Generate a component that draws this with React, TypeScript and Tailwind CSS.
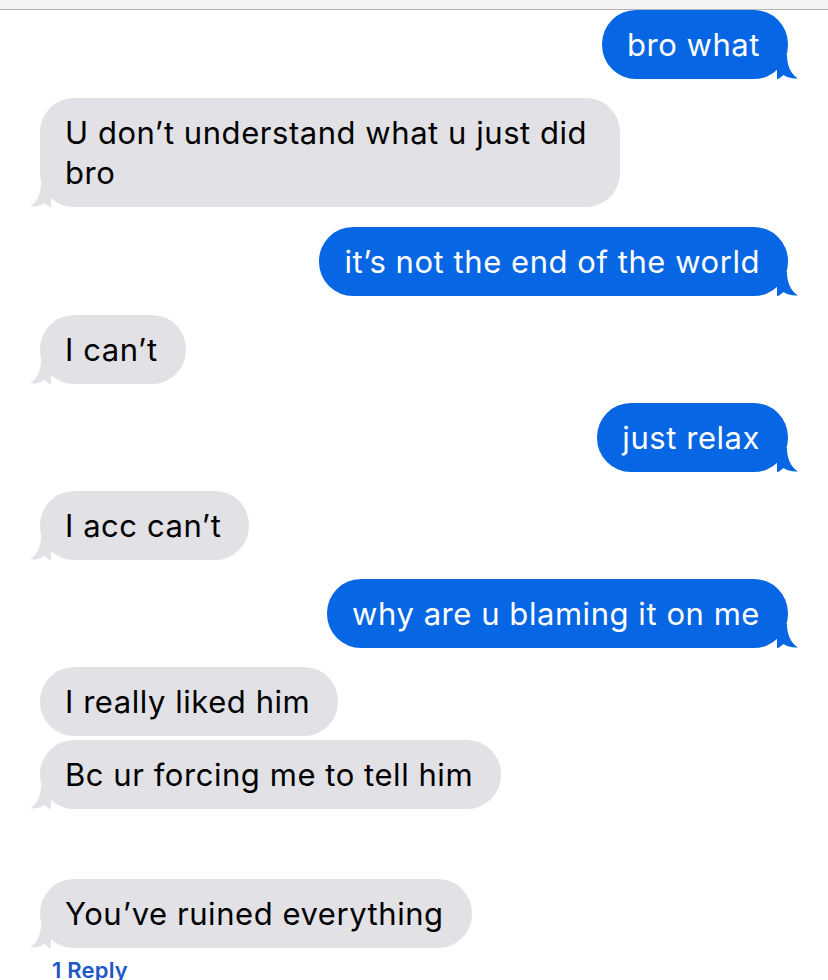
import React from 'react';

type Msg = { text: string; me?: boolean; tail?: boolean; gap?: string };

const MESSAGES: Msg[] = [
  { text: 'bro what', me: true, tail: true, gap: 'mt-0' },
  { text: 'U don\u2019t understand what u just did bro', tail: true, gap: 'mt-[19px]' },
  { text: 'it\u2019s not the end of the world', me: true, tail: true, gap: 'mt-[20px]' },
  { text: 'I can\u2019t', tail: true, gap: 'mt-[19px]' },
  { text: 'just relax', me: true, tail: true, gap: 'mt-[19px]' },
  { text: 'I acc can\u2019t', tail: true, gap: 'mt-[19px]' },
  { text: 'why are u blaming it on me', me: true, tail: true, gap: 'mt-[19px]' },
  { text: 'I really liked him', gap: 'mt-[19px]' },
  { text: 'Bc ur forcing me to tell him', tail: true, gap: 'mt-[4px]' },
  { text: 'You\u2019ve ruined everything', tail: true, gap: 'mt-[70px]' },
];

const Tail = ({ me }: { me?: boolean }) => (
  <svg
    width="22"
    height="24"
    viewBox="0 0 22 24"
    className={
      me
        ? 'absolute bottom-0 right-[-11px] fill-[#0766e3]'
        : 'absolute bottom-0 left-[-11px] -scale-x-100 fill-[#e1e1e6]'
    }
  >
    <path d="M0 0 H10 C10 11 14 19 21 23.5 C15 24 10 22.5 6.5 20 C4 22 2 24 0 24 Z" />
  </svg>
);

const Bubble = ({ msg }: { msg: Msg }) => (
  <div
    className={`relative max-w-[580px] rounded-[34px] pl-[25px] pr-[28px] py-[14.5px] text-[31px] leading-[40px] ${
      msg.me ? 'self-end bg-[#0766e3] text-white' : 'self-start bg-[#e1e1e6] text-black'
    } ${msg.gap}`}
  >
    {msg.tail && <Tail me={msg.me} />}
    <span className="relative">{msg.text}</span>
  </div>
);

export default function App() {
  return (
    <div className="w-[828px] h-[980px] overflow-hidden bg-white font-['Inter','Liberation_Sans',sans-serif] tracking-[0.55px]">
      <div className="h-[10px] bg-[#f3f3f5] border-b border-[#b5b5b8]" />
      <div className="flex flex-col px-[40px]">
        {MESSAGES.map((m, i) => (
          <Bubble key={i} msg={m} />
        ))}
        <p className="mt-[9px] pl-[12px] text-[22px] leading-[26px] font-semibold tracking-[0.2px] text-[#1d58c4]">
          1 Reply
        </p>
      </div>
    </div>
  );
}
